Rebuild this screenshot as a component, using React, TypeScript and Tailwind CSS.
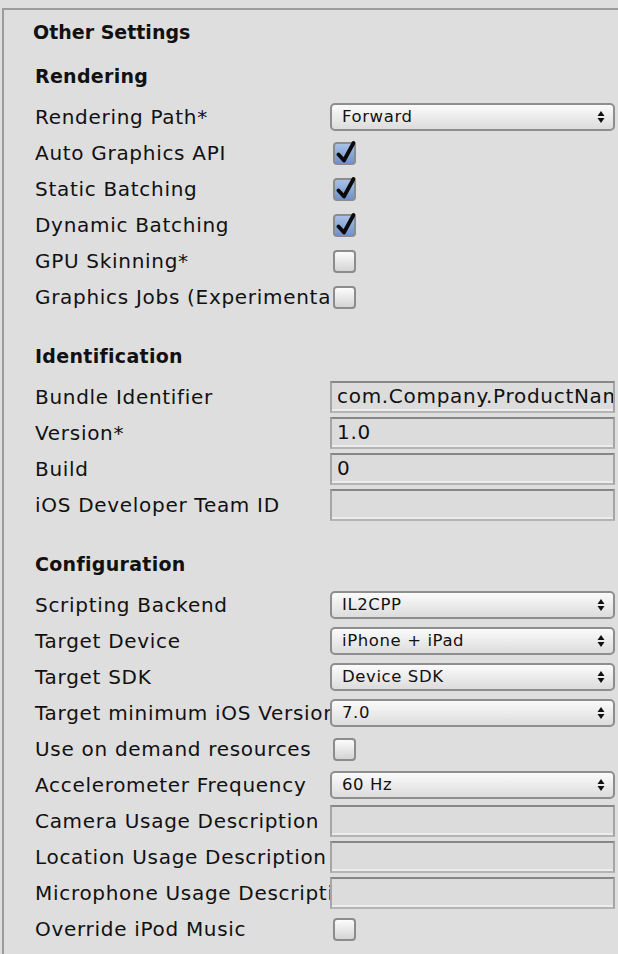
type Row =
  | { kind: "popup"; label: string; value: string }
  | { kind: "check"; label: string; checked: boolean }
  | { kind: "text"; label: string; value: string };

type Section = { title: string; rows: Row[] };

const sections: Section[] = [
  {
    title: "Rendering",
    rows: [
      { kind: "popup", label: "Rendering Path*", value: "Forward" },
      { kind: "check", label: "Auto Graphics API", checked: true },
      { kind: "check", label: "Static Batching", checked: true },
      { kind: "check", label: "Dynamic Batching", checked: true },
      { kind: "check", label: "GPU Skinning*", checked: false },
      { kind: "check", label: "Graphics Jobs (Experimental)", checked: false },
    ],
  },
  {
    title: "Identification",
    rows: [
      { kind: "text", label: "Bundle Identifier", value: "com.Company.ProductName" },
      { kind: "text", label: "Version*", value: "1.0" },
      { kind: "text", label: "Build", value: "0" },
      { kind: "text", label: "iOS Developer Team ID", value: "" },
    ],
  },
  {
    title: "Configuration",
    rows: [
      { kind: "popup", label: "Scripting Backend", value: "IL2CPP" },
      { kind: "popup", label: "Target Device", value: "iPhone + iPad" },
      { kind: "popup", label: "Target SDK", value: "Device SDK" },
      { kind: "popup", label: "Target minimum iOS Version", value: "7.0" },
      { kind: "check", label: "Use on demand resources", checked: false },
      { kind: "popup", label: "Accelerometer Frequency", value: "60 Hz" },
      { kind: "text", label: "Camera Usage Description", value: "" },
      { kind: "text", label: "Location Usage Description", value: "" },
      { kind: "text", label: "Microphone Usage Description", value: "" },
      { kind: "check", label: "Override iPod Music", checked: false },
    ],
  },
];

function Popup({ value }: { value: string }) {
  return (
    <div className="flex h-[28px] items-center justify-between rounded-[5px] border-2 border-[#8e8e8e] bg-gradient-to-b from-[#fbfbfb] to-[#dcdcdc] pl-[10px] pr-[8px] text-[16.5px] tracking-[0.6px]">
      <span className="whitespace-nowrap">{value}</span>
      <svg width="8" height="14" viewBox="0 0 8 14" aria-hidden="true">
        <path d="M4 1 L7.5 6 H0.5 Z M4 13 L7.5 8 H0.5 Z" fill="#111" />
      </svg>
    </div>
  );
}

function Check({ checked }: { checked: boolean }) {
  return (
    <div
      className={
        "relative ml-[3px] h-[23px] w-[23px] rounded-[4px] border-2 border-[#8c8c8c] " +
        (checked
          ? "bg-gradient-to-b from-[#a9c1e6] to-[#6f93cb]"
          : "bg-gradient-to-b from-[#fcfcfc] to-[#d4d4d4]")
      }
    >
      {checked ? (
        <svg
          className="absolute left-[1px] top-[-5px]"
          width="20"
          height="25"
          viewBox="0 0 20 25"
          aria-hidden="true"
        >
          <path
            d="M2.5 15.5 L8 21.5 L17.5 4"
            fill="none"
            stroke="#0a0a0a"
            strokeWidth="3.8"
            strokeLinecap="round"
            strokeLinejoin="round"
          />
        </svg>
      ) : null}
    </div>
  );
}

function TextField({ value }: { value: string }) {
  return (
    <div className="h-[32px] overflow-hidden whitespace-nowrap border-2 border-[#a5a5a5] border-t-[#878787] border-b-[#b4b4b4] bg-[#dcdcdc] pl-[5px] text-[20px] leading-[27px] tracking-[0.7px] shadow-[inset_0_-2px_0_#ececec]">
      {value}
    </div>
  );
}

function FieldRow({ row }: { row: Row }) {
  return (
    <div className="flex h-[36px] items-center">
      <div className="w-[326px] shrink-0 overflow-hidden whitespace-nowrap pl-[31px] text-[20px] tracking-[0.7px]">
        {row.label}
      </div>
      <div className="min-w-0 flex-1 pr-[3px]">
        {row.kind === "popup" ? <Popup value={row.value} /> : null}
        {row.kind === "check" ? <Check checked={row.checked} /> : null}
        {row.kind === "text" ? <TextField value={row.value} /> : null}
      </div>
    </div>
  );
}

export default function App() {
  return (
    <div className="min-h-screen bg-[#dedede] pt-[8px] text-[19px] text-[#111] font-['Lucida_Grande','DejaVu_Sans',sans-serif]">
      <div className="ml-[2px] border-l-2 border-t-2 border-[#9c9c9c] pb-[7px]">
        <div className="flex h-[44px] items-center pl-[29px] font-bold">Other Settings</div>
        {sections.map((section, i) => (
          <div key={section.title} className={i > 0 ? "pt-[19px]" : ""}>
            <div className="flex h-[45px] items-center pl-[31px] font-bold tracking-[0.3px]">
              {section.title}
            </div>
            {section.rows.map((row) => (
              <FieldRow key={row.label} row={row} />
            ))}
          </div>
        ))}
      </div>
    </div>
  );
}
